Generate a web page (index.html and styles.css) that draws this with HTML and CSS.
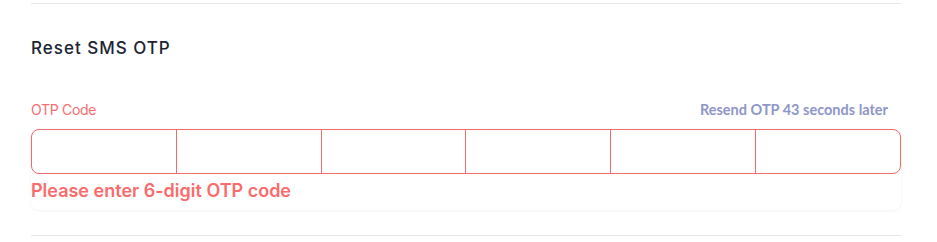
FILE: index.html
```html
<!DOCTYPE html>
<html>
<head>
<meta charset="utf-8">
<link rel="stylesheet" href="styles.css">
</head>
<body>
<div class="wrap">
  <section class="section">
    <h2 class="title">Reset SMS OTP</h2>
    <div class="labels">
      <span class="label">OTP Code</span>
      <span class="resend">Resend OTP 43 seconds later</span>
    </div>
    <div class="card">
      <div class="otp">
        <input class="cell" type="text" maxlength="1">
        <input class="cell" type="text" maxlength="1">
        <input class="cell" type="text" maxlength="1">
        <input class="cell" type="text" maxlength="1">
        <input class="cell" type="text" maxlength="1">
        <input class="cell" type="text" maxlength="1">
      </div>
      <div class="error">Please enter 6-digit OTP code</div>
    </div>
  </section>
</div>
</body>
</html>
```

FILE: styles.css
```css
html, body {
  margin: 0;
  padding: 0;
  background: #ffffff;
}
.wrap {
  padding: 3px 36px 0 31px;
}
.section {
  border-top: 1px solid #e6e6e8;
  border-bottom: 1px solid #e4e4ea;
  padding: 34px 0 25px;
}
.title {
  margin: 0;
  font-family: Inter, sans-serif;
  font-size: 17px;
  font-weight: 500;
  letter-spacing: 1px;
  color: #1c2433;
  line-height: 20px;
}
.labels {
  display: flex;
  justify-content: space-between;
  align-items: baseline;
  margin-top: 43px;
  padding-right: 13px;
}
.label {
  font-family: Inter, sans-serif;
  font-size: 14px;
  color: #f66e6e;
  letter-spacing: -0.3px;
  line-height: 18px;
}
.resend {
  font-family: Lato, sans-serif;
  font-size: 14.5px;
  font-weight: 700;
  color: #8f96c8;
  line-height: 18px;
}
.card {
  margin-top: 10px;
  border-radius: 8px;
  box-shadow: 0 1px 3px rgba(0,0,0,0.06);
  padding-bottom: 7px;
}
.otp {
  display: flex;
  border: 1px solid #f26b6b;
  border-radius: 8px;
  height: 43px;
  overflow: hidden;
}
.cell {
  flex: 1;
  min-width: 0;
  border: none;
  border-left: 1px solid #f26b6b;
  outline: none;
  background: transparent;
  margin: 0;
  padding: 0;
  font-family: Inter, sans-serif;
  font-size: 18px;
  text-align: center;
}
.cell:first-child {
  border-left: none;
}
.error {
  font-family: Inter, sans-serif;
  font-size: 18px;
  font-weight: 600;
  color: #fb6b6b;
  line-height: 24px;
  padding-top: 5px;
}
```
